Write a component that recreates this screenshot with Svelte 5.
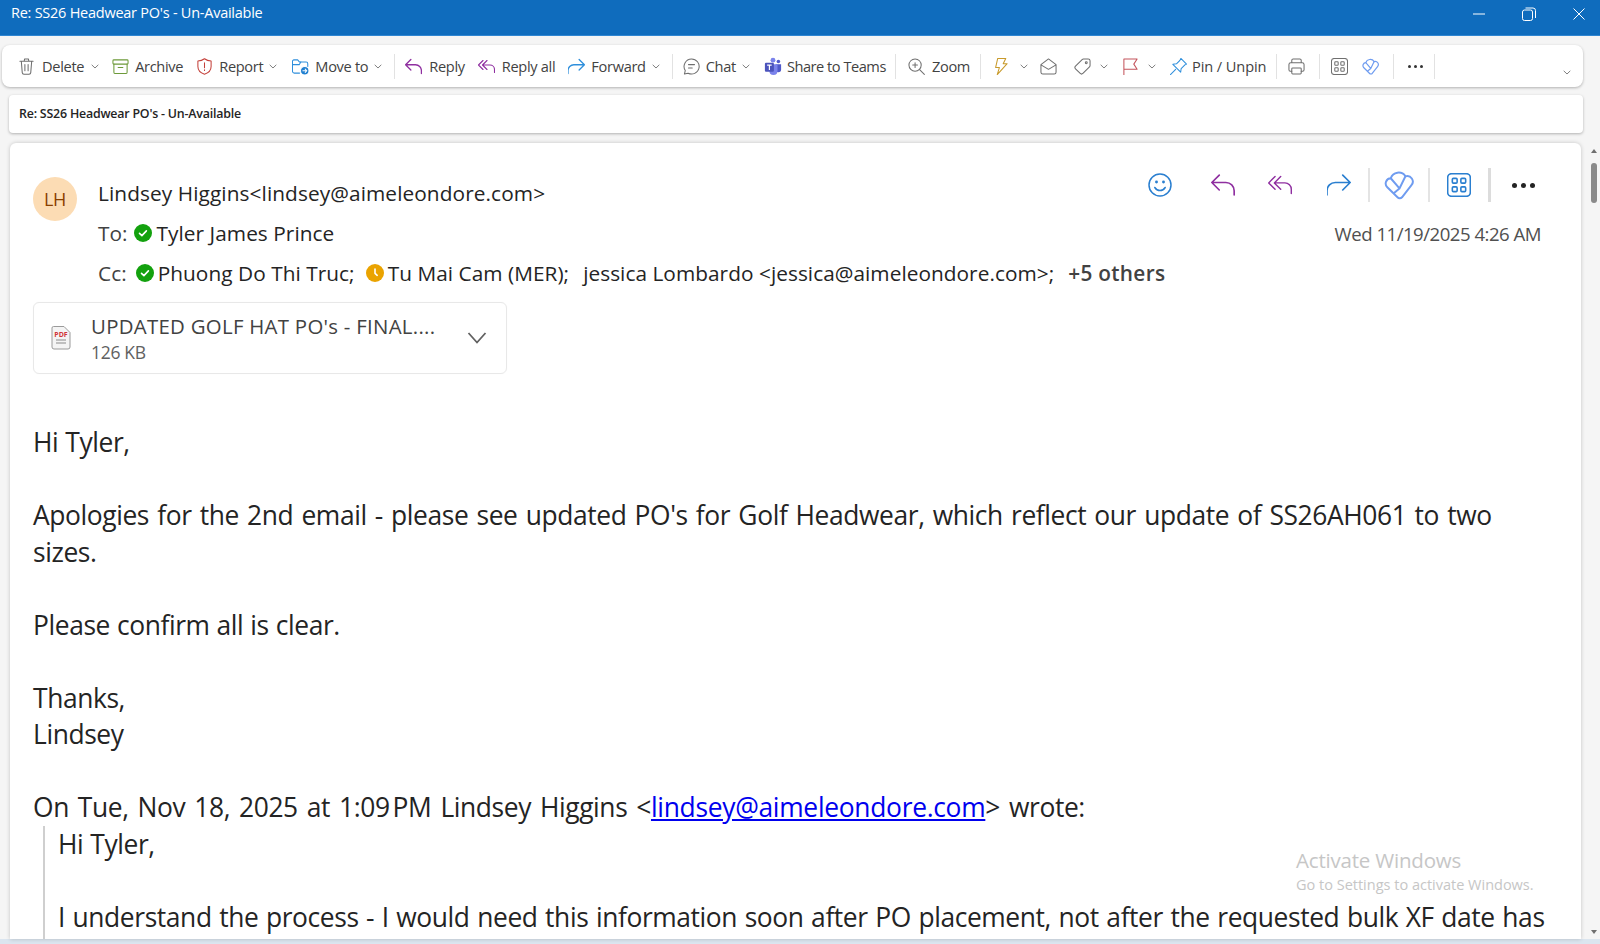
<script>
  const replyBox = '3 3 14.500 14'
  const replyAllBox = '1 3 17 14'
</script>

{#snippet replyIcon()}
  <path d="M8 4 3.500 8.500 8 13M3.500 8.500H12a5 5 0 0 1 5 5V16" />
{/snippet}
{#snippet replyAllIcon()}
  <path d="M6 4 1.500 8.500 6 13M10 4 5.500 8.500 10 13M5.500 8.500H13a4.500 4.500 0 0 1 4.500 4.500v3" />
{/snippet}
{#snippet forwardIcon()}
  <path d="M12.500 4 17 8.500 12.500 13M17 8.500H8a5 5 0 0 0-5 5V16" />
{/snippet}
{#snippet appsIcon()}
  <rect x="1.500" y="1.500" width="17" height="17" rx="3" />
  <rect x="5" y="5" width="3.600" height="3.600" rx=".8" />
  <rect x="11.400" y="5" width="3.600" height="3.600" rx=".8" />
  <rect x="5" y="11.400" width="3.600" height="3.600" rx=".8" />
  <rect x="11.400" y="11.400" width="3.600" height="3.600" rx=".8" />
{/snippet}
{#snippet loopIcon()}
  <path d="M10.500 18.800a2 2 0 0 1-1.500-.6L2.200 11.500a3.500 3.500 0 0 1 2.300-6A5.500 5.500 0 0 1 14.300 4.200a3.700 3.700 0 0 1 4 5.900L12 18.200a2 2 0 0 1-1.500.6Z" />
  <path d="M4.500 5.500 10.300 12.300 14.300 4.200M6.700 15.300 10.300 12.300" />
{/snippet}
{#snippet chev()}
  <svg class="chev" viewBox="0 0 8 5"><path d="M.7.8 4 4 7.300.8" /></svg>
{/snippet}

<div class="app">
  <header class="titlebar">
    <span class="title">Re: SS26 Headwear PO's - Un-Available</span>
    <div class="winctl">
      <svg viewBox="0 0 12 12" class="w-min"><path d="M0 6h12" /></svg>
      <svg viewBox="0 0 14 14" class="w-max"><rect x=".5" y="3" width="10" height="10.500" rx="2" /><path d="M3.500 1H11a2.500 2.500 0 0 1 2.500 2.500V11" /></svg>
      <svg viewBox="0 0 12 12" class="w-close"><path d="M.5.5l11 11M11.500.5l-11 11" /></svg>
    </div>
  </header>

  <nav class="toolbar">
    <div class="tb del">
      <svg viewBox="1 1 18 18" class="ic grey"><path d="M3 4.500h14M7.500 4.500 8 2h4l.5 2.500M4.500 4.500l1 12a1.800 1.800 0 0 0 1.800 1.600h5.400a1.800 1.800 0 0 0 1.800-1.600l1-12M8.300 8v6.500M11.700 8v6.500" /></svg>
      <span>Delete</span>{@render chev()}
    </div>
    <div class="tb arc">
      <svg viewBox="1 1 18 18" class="ic green"><rect x="2" y="3" width="16" height="4.500" rx="1" /><path d="M3 7.500V16a1.500 1.500 0 0 0 1.500 1.500h11A1.500 1.500 0 0 0 17 16V7.500M7.500 11h5" /></svg>
      <span>Archive</span>
    </div>
    <div class="tb rep">
      <svg viewBox="1 1 18 18" class="ic red"><path d="M10 1.800c2 1.600 4.300 2.400 7 2.400v5.800c0 4-2.500 6.700-7 8.200-4.500-1.500-7-4.200-7-8.200V4.200c2.700 0 5-.8 7-2.400ZM10 6v5.200M10 13.400v.8" /></svg>
      <span>Report</span>{@render chev()}
    </div>
    <div class="tb mov">
      <svg viewBox="1 1 18 18" class="ic blue"><path d="M9 17H3.500A2 2 0 0 1 1.500 15V4.500a1.500 1.500 0 0 1 1.500-1.500h4l2 2.300h7a1.700 1.700 0 0 1 1.700 1.700v3" /><path d="M1.500 8h7.300l1.500-2.700" /><circle cx="14.500" cy="14.500" r="4.500" class="fill" /><path d="M12.500 14.500h4M15 12.800l1.700 1.700-1.700 1.700" class="white" /></svg>
      <span>Move to</span>{@render chev()}
    </div>
    <i class="sep"></i>
    <div class="tb rpl">
      <svg viewBox={replyBox} class="ic purple">{@render replyIcon()}</svg>
      <span>Reply</span>
    </div>
    <div class="tb rpa">
      <svg viewBox={replyAllBox} class="ic purple">{@render replyAllIcon()}</svg>
      <span>Reply all</span>
    </div>
    <div class="tb fwd">
      <svg viewBox={replyBox} class="ic blue">{@render forwardIcon()}</svg>
      <span>Forward</span>{@render chev()}
    </div>
    <i class="sep"></i>
    <div class="tb cht">
      <svg viewBox="1 1 18 18" class="ic grey"><path d="M10 2a8 8 0 1 1-3.600 15.100L2.500 18l.9-3.700A8 8 0 0 1 10 2ZM6.800 8h6.400M6.800 11.500h4" /></svg>
      <span>Chat</span>{@render chev()}
    </div>
    <div class="tb tms">
      <svg viewBox="0 0 20 20" class="ic-solid"><circle cx="10" cy="3.500" r="2.700" fill="#7b83eb" /><circle cx="16" cy="5" r="2" fill="#5059c9" /><path d="M13 8h6v6a3 3 0 0 1-6 0Z" fill="#5059c9" /><path d="M6 8h9v7.500a4.500 4.500 0 0 1-9 0Z" fill="#7b83eb" /><rect x="1" y="6.500" width="10" height="10" rx="1.200" fill="#4b53bc" /><path d="M3.500 9h5M6 9v5.500" stroke="#fff" stroke-width="1.300" fill="none" /></svg>
      <span>Share to Teams</span>
    </div>
    <i class="sep"></i>
    <div class="tb zom">
      <svg viewBox="1 1 18 18" class="ic grey"><circle cx="8.500" cy="8.500" r="6.500" /><path d="m13.300 13.300 5 5M8.500 6v5M6 8.500h5" /></svg>
      <span>Zoom</span>
    </div>
    <i class="sep"></i>
    <div class="tb blt">
      <svg viewBox="2 1 16 18" class="ic gold"><path d="M6 1.500h8.500L11.800 7H16L5.500 18.500 7.800 11H3.800Z" /></svg>{@render chev()}
    </div>
    <div class="tb env">
      <svg viewBox="1 1 18 18" class="ic grey"><path d="M2 8 10 2l8 6v8a2 2 0 0 1-2 2H4a2 2 0 0 1-2-2ZM2.500 8.500 10 13l7.500-4.500" /></svg>
    </div>
    <div class="tb tag">
      <svg viewBox="1 1 18 18" class="ic grey"><path d="M11 2h5a2 2 0 0 1 2 2v5a2 2 0 0 1-.6 1.400l-7 7a2 2 0 0 1-2.800 0l-5-5a2 2 0 0 1 0-2.800l7-7A2 2 0 0 1 11 2Z" /><circle cx="14" cy="6" r="1" /></svg>{@render chev()}
    </div>
    <div class="tb flg">
      <svg viewBox="1 1 18 18" class="ic rose"><path d="M3 19V2h14l-3.500 5.500L17 13H3" /></svg>{@render chev()}
    </div>
    <div class="tb pin">
      <svg viewBox="1 1 18 18" class="ic blue"><path d="M12.500 1.500 18.500 7.500 16.500 8.500 12.800 12.200 12.300 16 4 7.700l3.800-.5L11.500 3.500ZM7 13l-5.500 5.500" /></svg>
      <span>Pin / Unpin</span>
    </div>
    <i class="sep"></i>
    <div class="tb prt">
      <svg viewBox="1 1 18 18" class="ic grey"><path d="M5 6V3.500A1.500 1.500 0 0 1 6.500 2h7A1.500 1.500 0 0 1 15 3.500V6M5 15H3.500A1.500 1.500 0 0 1 2 13.500V8a2 2 0 0 1 2-2h12a2 2 0 0 1 2 2v5.500a1.500 1.500 0 0 1-1.500 1.500H15" /><rect x="5" y="11.500" width="10" height="6.500" rx="1" /></svg>
    </div>
    <i class="sep"></i>
    <div class="tb app-i">
      <svg viewBox="1 1 18 18" class="ic grey">{@render appsIcon()}</svg>
    </div>
    <div class="tb lop">
      <svg viewBox="0 0 20 20" class="ic periw">{@render loopIcon()}</svg>
    </div>
    <i class="sep"></i>
    <div class="tb mor"><b></b><b></b><b></b></div>
    <i class="sep"></i>
    <svg viewBox="0 0 8 5" class="chev collapse"><path d="M.7.8 4 4 7.300.8" /></svg>
  </nav>

  <div class="subject">Re: SS26 Headwear PO's - Un-Available</div>

  <div class="reading">
    <main class="message">
      <section class="head">
        <div class="avatar">LH</div>
        <div class="people">
          <div class="from">Lindsey Higgins&lt;lindsey@aimeleondore.com&gt;</div>
          <div class="to">
            <span class="lab">To:</span>
            <svg class="dot" viewBox="0 0 18 18"><circle cx="9" cy="9" r="9" fill="#13a10e" /><path d="m5.500 9.300 2.400 2.300 4.500-4.700" class="tick" /></svg>
            <span class="who">Tyler James Prince</span>
          </div>
          <div class="cc">
            <span class="lab">Cc:</span>
            <svg class="dot" viewBox="0 0 18 18"><circle cx="9" cy="9" r="9" fill="#13a10e" /><path d="m5.500 9.300 2.400 2.300 4.500-4.700" class="tick" /></svg>
            <span class="who p1">Phuong Do Thi Truc;</span>
            <svg class="dot" viewBox="0 0 18 18"><circle cx="9" cy="9" r="9" fill="#eaa300" /><path d="M9 5v4.300l2.200 2" class="tick" /></svg>
            <span class="who p2">Tu Mai Cam (MER);</span>
            <span class="who p3">jessica Lombardo &lt;jessica@aimeleondore.com&gt;;</span>
            <b class="more">+5 others</b>
          </div>
        </div>
        <div class="side">
          <div class="actions">
            <svg viewBox="0 0 24 24" class="act smile blue-d"><circle cx="12" cy="12" r="11" /><path d="M6.800 14.500c1.200 2 3 3 5.200 3s4-1 5.200-3" /><circle cx="8.500" cy="9" r=".7" /><circle cx="15.500" cy="9" r=".7" /></svg>
            <svg viewBox={replyBox} class="act r1 purple">{@render replyIcon()}</svg>
            <svg viewBox={replyAllBox} class="act r2 purple">{@render replyAllIcon()}</svg>
            <svg viewBox={replyBox} class="act r3 blue-d">{@render forwardIcon()}</svg>
            <i class="asep"></i>
            <svg viewBox="0 0 20 20" class="act big periw">{@render loopIcon()}</svg>
            <i class="asep"></i>
            <svg viewBox="1 1 18 18" class="act grid blue-d">{@render appsIcon()}</svg>
            <i class="asep thick"></i>
            <div class="dots"><b></b><b></b><b></b></div>
          </div>
          <div class="date">Wed 11/19/2025 4:26 AM</div>
        </div>
      </section>

      <section class="attach">
        <svg viewBox="0 0 20 24" class="pdf"><path d="M2.500.5H13l6 6V21a2 2 0 0 1-2 2H3a2 2 0 0 1-2-2V2A1.500 1.500 0 0 1 2.500.5Z" fill="#f4f4f4" stroke="#9a9a9a" /><text x="10" y="10.500" class="pdftxt">PDF</text><path d="M5 14h10M5 17h10" stroke="#8a8a8a" /></svg>
        <div class="att-text">
          <div class="att-name">UPDATED GOLF HAT PO's - FINAL....</div>
          <div class="att-size">126 KB</div>
        </div>
        <svg viewBox="0 0 20 14" class="att-chev"><path d="M1.500 2 10 11.500 18.500 2" /></svg>
      </section>

      <article class="body">
        <p class="tight">Hi Tyler,</p>
        <p>Apologies for the 2nd email - please see updated PO's for Golf Headwear, which reflect our update of SS26AH061 to two sizes.</p>
        <p class="tight">Please confirm all is clear.</p>
        <p>Thanks,<br />Lindsey</p>
        <div class="quote-head">On Tue, Nov 18, 2025 at 1:09{'\u202f'}PM Lindsey Higgins &lt;<a href="#top">lindsey@aimeleondore.com</a>&gt; wrote:</div>
        <blockquote>
          <p class="tight">Hi Tyler,</p>
          <p class="clip">I understand the process - I would need this information soon after PO placement, not after the requested bulk XF date has</p>
        </blockquote>
      </article>

      <div class="activate">
        <div class="a1">Activate Windows</div>
        <div class="a2">Go to Settings to activate Windows.</div>
      </div>
    </main>

    <aside class="scrollbar">
      <i class="up"></i>
      <i class="thumb"></i>
      <i class="down"></i>
    </aside>
  </div>
  <div class="foot"></div>
</div>

<style>
  :global(body) {
    margin: 0;
    background: #f5f5f5;
  }

  .app {
    height: 944px;
    display: flex;
    flex-direction: column;
    overflow: hidden;
    font-family: "Open Sans", "Noto Sans", sans-serif;
    color: #242424;
    background: #f5f5f5;
  }

  .titlebar {
    height: 36px;
    flex: none;
    display: flex;
    align-items: flex-start;
    justify-content: space-between;
    background: #0f6cbd;
    color: #fff;
    border-bottom: 1px solid #2f86d2;
    box-sizing: border-box;
    padding-left: 11px;
  }

  .title {
    font-size: 14.500px;
    line-height: 26px;
    letter-spacing: -0.25px;
  }

  .winctl {
    display: flex;
    align-items: center;
    height: 27px;
  }

  .winctl svg {
    fill: none;
    stroke: #fff;
    stroke-width: 1;
  }

  .w-min { width: 12px; height: 12px; margin-right: 37px; }
  .w-max { width: 14px; height: 14px; margin-right: 37px; }
  .w-close { width: 12px; height: 12px; margin-right: 15px; }

  .toolbar {
    flex: none;
    margin: 9px 17px 0 2px;
    height: 42px;
    border-radius: 8px;
    background: #fff;
    box-shadow: 0 1px 3px rgba(0, 0, 0, 0.28);
    display: flex;
    align-items: center;
    padding-left: 16px;
    position: relative;
    font-size: 14.600px;
    letter-spacing: -0.32px;
    color: #424242;
  }

  .tb {
    display: flex;
    align-items: center;
    gap: 7px;
    white-space: nowrap;
    line-height: 20px;
  }

  .del, .rep, .mov, .fwd, .cht { gap: 6px; }
  .del { margin-right: 13px; gap: 7px; }
  .arc { margin-right: 13px; gap: 6px; }
  .rep { margin-right: 15px; }
  .mov { margin-right: 12px; }
  .rpl { margin-left: 10px; margin-right: 13px; }
  .rpa { margin-right: 13px; }
  .fwd { margin-right: 12px; }
  .cht { margin-left: 10px; margin-right: 14px; }
  .tms { margin-right: 9px; gap: 5px; letter-spacing: -0.47px; }
  .zom { margin-left: 12px; margin-right: 10px; }
  .blt { margin-left: 12px; margin-right: 12px; gap: 10px; }
  .env { margin-right: 17px; }
  .tag { margin-right: 14px; gap: 9px; }
  .flg { margin-right: 14px; gap: 9px; }
  .pin { margin-right: 10px; gap: 5px; letter-spacing: -0.1px; }
  .prt { margin-left: 11px; margin-right: 14px; }
  .app-i { margin-left: 11px; margin-right: 14px; }
  .lop { margin-right: 14px; }
  .lop svg { stroke-width: 1.400; }
  .mor { margin-left: 14px; margin-right: 11px; gap: 3px; }

  .mor b {
    width: 3px;
    height: 3px;
    border-radius: 50%;
    background: #333;
  }

  .ic {
    width: 17px;
    height: 17px;
    flex: none;
    fill: none;
    stroke-width: 1.100;
    stroke-linecap: round;
    stroke-linejoin: round;
  }

  .ic-solid {
    width: 18px;
    height: 18px;
    flex: none;
  }

  .grey { stroke: #6f6f6f; }
  .green { stroke: #6d9a3a; }
  .red { stroke: #c4403a; }
  .blue { stroke: #2f8fdc; }
  .purple { stroke: #8f2fa0; }
  .gold { stroke: #c89a2b; }
  .rose { stroke: #c4545c; }
  .periw { stroke: #6f9cf0; }
  .blue-d { stroke: #2a7fd0; }
  .fill { fill: #1f7fd0; stroke: #fff; }
  .white { stroke: #fff; }

  .chev {
    width: 8px;
    height: 5px;
    flex: none;
    fill: none;
    stroke: #707070;
    stroke-width: 0.9;
  }

  .collapse {
    position: absolute;
    right: 12px;
    top: 25px;
  }

  .sep {
    width: 1px;
    height: 25px;
    flex: none;
    background: #e2e2e2;
  }

  .subject {
    flex: none;
    margin: 8px 17px 0 9px;
    height: 38px;
    padding-left: 10px;
    line-height: 37px;
    border-radius: 4px;
    background: #fff;
    box-shadow: 0 1px 3px rgba(0, 0, 0, 0.28);
    font-size: 12.400px;
    font-weight: 600;
    letter-spacing: -0.2px;
  }

  .reading {
    flex: 1;
    min-height: 0;
    margin-top: 10px;
    display: flex;
  }

  .message {
    flex: 1;
    min-width: 0;
    margin-left: 10px;
    padding: 34px 0 0 23px;
    position: relative;
    overflow: hidden;
    background: #fff;
    border-radius: 6px 6px 0 0;
    box-shadow: 0 0 4px rgba(0, 0, 0, 0.2);
  }

  .scrollbar {
    flex: none;
    width: 19px;
    position: relative;
  }

  .up, .down {
    position: absolute;
    left: 10px;
    width: 0;
    height: 0;
    border-left: 3px solid transparent;
    border-right: 3px solid transparent;
  }

  .up { top: 6px; border-bottom: 4px solid #6f6f6f; }
  .down { bottom: 5px; border-top: 4px solid #6f6f6f; }

  .thumb {
    position: absolute;
    top: 20px;
    left: 10px;
    width: 6px;
    height: 40px;
    border-radius: 3px;
    background: #8a8a8a;
  }

  .foot {
    height: 5px;
    flex: none;
    background: #dbe5ef;
  }

  .head {
    display: flex;
    align-items: flex-start;
  }

  .avatar {
    width: 44px;
    height: 44px;
    flex: none;
    border-radius: 50%;
    background: #fcdcb4;
    color: #8a3f00;
    font-size: 18px;
    line-height: 44px;
    text-align: center;
    margin-right: 21px;
    letter-spacing: -0.3px;
  }

  .people {
    flex: 1;
    min-width: 0;
    font-size: 20.800px;
    letter-spacing: 0.05px;
    line-height: 40px;
  }

  .from { margin-top: -4px; letter-spacing: 0.1px; }

  .to, .cc {
    display: flex;
    align-items: center;
    white-space: nowrap;
  }

  .lab { color: #424242; margin-right: 6px; }
  .cc .lab { margin-right: 9px; }
  .who { margin-left: 4px; }
  .to .who { margin-left: 5px; }
  .p1 { margin-right: 11px; }
  .p2 { margin-right: 14px; }
  .p3 { margin-left: 0; margin-right: 14px; }
  .more { font-weight: 600; color: #424242; letter-spacing: 0.3px; }

  .dot {
    width: 18px;
    height: 18px;
    flex: none;
  }

  .tick {
    fill: none;
    stroke: #fff;
    stroke-width: 1.600;
    stroke-linecap: round;
    stroke-linejoin: round;
  }

  .side {
    flex: none;
    width: 420px;
    margin-right: 40px;
    display: flex;
    flex-direction: column;
    align-items: flex-end;
  }

  .actions {
    display: flex;
    align-items: center;
    height: 36px;
    margin-top: -10px;
    margin-right: 6px;
  }

  .act {
    width: 24px;
    height: 24px;
    flex: none;
    fill: none;
    stroke-width: 1;
    stroke-linecap: round;
    stroke-linejoin: round;
  }

  .smile { stroke-width: 1.500; margin-right: 39px; }
  .r1 { margin-right: 33px; }
  .r2 { margin-right: 35px; }
  .r3 { margin-right: 17px; }
  .act.big { width: 30px; height: 30px; margin: 0 14px 0 14px; stroke-width: 1.300; }
  .act.grid { margin: 0 17px 0 17px; stroke-width: 1.200; }
  .asep { width: 2px; height: 34px; flex: none; background: #e4e4e4; }
  .asep.thick { width: 3px; background: #dcdcdc; }

  .dots {
    display: flex;
    gap: 4px;
    margin-left: 21px;
  }

  .dots b {
    width: 5px;
    height: 5px;
    border-radius: 50%;
    background: #242424;
  }

  .date {
    margin-top: 18px;
    font-size: 18.600px;
    line-height: 26px;
    letter-spacing: -0.5px;
    color: #505050;
  }

  .attach {
    width: 474px;
    height: 72px;
    box-sizing: border-box;
    margin-top: 9px;
    border: 1px solid #e8e8e8;
    border-radius: 6px;
    display: flex;
    align-items: center;
    padding-left: 17px;
    box-shadow: 0 0 1px rgba(0, 0, 0, 0.06);
  }

  .pdf {
    width: 20px;
    height: 24px;
    flex: none;
    margin-right: 20px;
  }

  .pdftxt {
    font-size: 7px;
    font-weight: 700;
    fill: #d13438;
    text-anchor: middle;
  }

  .att-text {
    flex: 1;
    min-width: 0;
    white-space: nowrap;
  }

  .att-name {
    font-size: 20.400px;
    line-height: 28px;
    letter-spacing: 0.28px;
    color: #424242;
  }

  .att-size {
    font-size: 17.500px;
    line-height: 24px;
    letter-spacing: -0.3px;
    color: #616161;
  }

  .att-chev {
    width: 20px;
    height: 14px;
    flex: none;
    fill: none;
    stroke: #616161;
    stroke-width: 1.800;
    margin-right: 19px;
  }

  .body {
    margin-top: 50px;
    font-size: 26.400px;
    line-height: 36.500px;
    letter-spacing: -0.4px;
    word-spacing: 1.700px;
    color: #242424;
    padding-right: 60px;
  }

  .body p {
    margin: 0 0 36.500px;
  }

  .body p.tight {
    word-spacing: 0.500px;
  }

  .body a {
    color: #0000ee;
    letter-spacing: -0.3px;
  }

  .quote-head {
    word-spacing: 2.500px;
  }

  blockquote {
    margin: 0 0 0 10px;
    padding: 0 0 60px 13px;
    border-left: 2px solid #cfcfcf;
    margin-right: -60px;
  }

  .clip {
    white-space: nowrap;
    word-spacing: 1.100px;
  }

  .activate {
    position: absolute;
    left: 1286px;
    top: 702px;
    color: #c6c6c6;
    white-space: nowrap;
  }

  .a1 { font-size: 20.500px; line-height: 30px; letter-spacing: -0.2px; }
  .a2 { font-size: 14.500px; line-height: 20px; }
</style>
